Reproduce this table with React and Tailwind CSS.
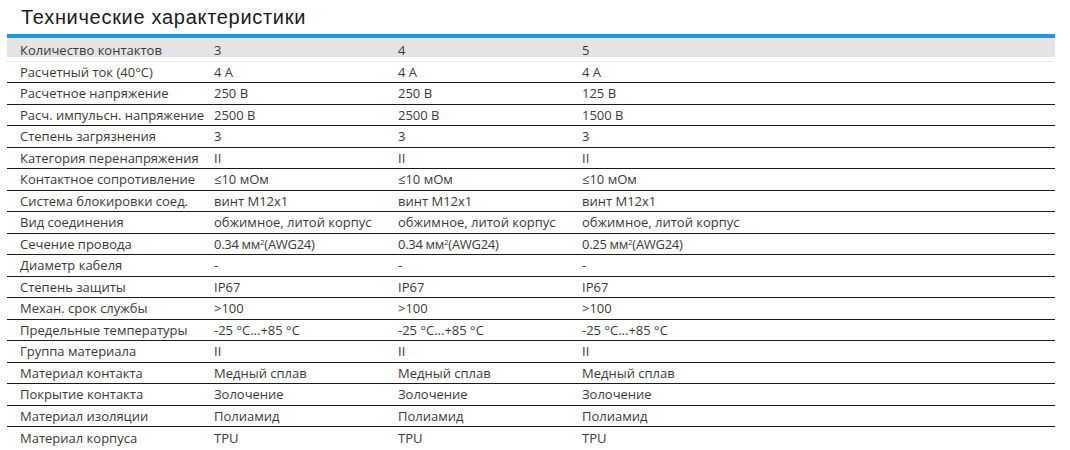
const rows = [
  ["Расчетный ток (40°C)", "4 A", "4 A", "4 A"],
  ["Расчетное напряжение", "250 В", "250 В", "125 В"],
  ["Расч. импульсн. напряжение", "2500 В", "2500 В", "1500 В"],
  ["Степень загрязнения", "3", "3", "3"],
  ["Категория перенапряжения", "II", "II", "II"],
  ["Контактное сопротивление", "≤10 мОм", "≤10 мОм", "≤10 мОм"],
  ["Система блокировки соед.", "винт M12x1", "винт M12x1", "винт M12x1"],
  ["Вид соединения", "обжимное, литой корпус", "обжимное, литой корпус", "обжимное, литой корпус"],
  ["Сечение провода", "wire:0.34", "wire:0.34", "wire:0.25"],
  ["Диаметр кабеля", "-", "-", "-"],
  ["Степень защиты", "IP67", "IP67", "IP67"],
  ["Механ. срок службы", ">100", ">100", ">100"],
  ["Предельные температуры", "-25 °C...+85 °C", "-25 °C...+85 °C", "-25 °C...+85 °C"],
  ["Группа материала", "II", "II", "II"],
  ["Материал контакта", "Медный сплав", "Медный сплав", "Медный сплав"],
  ["Покрытие контакта", "Золочение", "Золочение", "Золочение"],
  ["Материал изоляции", "Полиамид", "Полиамид", "Полиамид"],
  ["Материал корпуса", "TPU", "TPU", "TPU"],
];

function Cell({ value }) {
  if (value.startsWith("wire:")) {
    // condensed "0.34 мм²(AWG24)" as in the print
    return (
      <span className="text-[13px] tracking-[-0.3px]">
        {value.slice(5)} мм<sup className="text-[8px]">2</sup>(AWG24)
      </span>
    );
  }
  return <span>{value}</span>;
}

export default function App() {
  return (
    <div className="h-[450px] w-[1070px] overflow-hidden bg-white font-['Open_Sans',sans-serif] text-[13px] text-[#3a3a3a]">
      <div className="h-[34px] pl-[21px] pt-[5px] font-['Liberation_Sans',Arial,sans-serif] text-[20px] leading-[24px] tracking-[0.7px] text-[#1a1a1a]">
        Технические характеристики
      </div>

      <div className="ml-[7px] w-[1048px]">
        <div className="h-[4px] bg-[#1b9bd7]" />
        <div className="grid h-[19px] grid-cols-[207px_184px_184px_1fr] bg-[#e4e4e6] pt-[6px] leading-[13px]">
          <div className="pl-[13px]">Количество контактов</div>
          <div>3</div>
          <div>4</div>
          <div>5</div>
        </div>
        <div className="h-[4.5px] border-b border-[#ececec]" />

        {rows.map((r, i) => (
          <div
            key={r[0]}
            className={
              "grid h-[21.5px] grid-cols-[207px_184px_184px_1fr] items-center leading-[16px] " +
              (i < rows.length - 1 ? "border-b border-[#1a1a1a]" : "")
            }
          >
            <div className="pl-[13px]">{r[0]}</div>
            <div><Cell value={r[1]} /></div>
            <div><Cell value={r[2]} /></div>
            <div><Cell value={r[3]} /></div>
          </div>
        ))}
      </div>
    </div>
  );
}
